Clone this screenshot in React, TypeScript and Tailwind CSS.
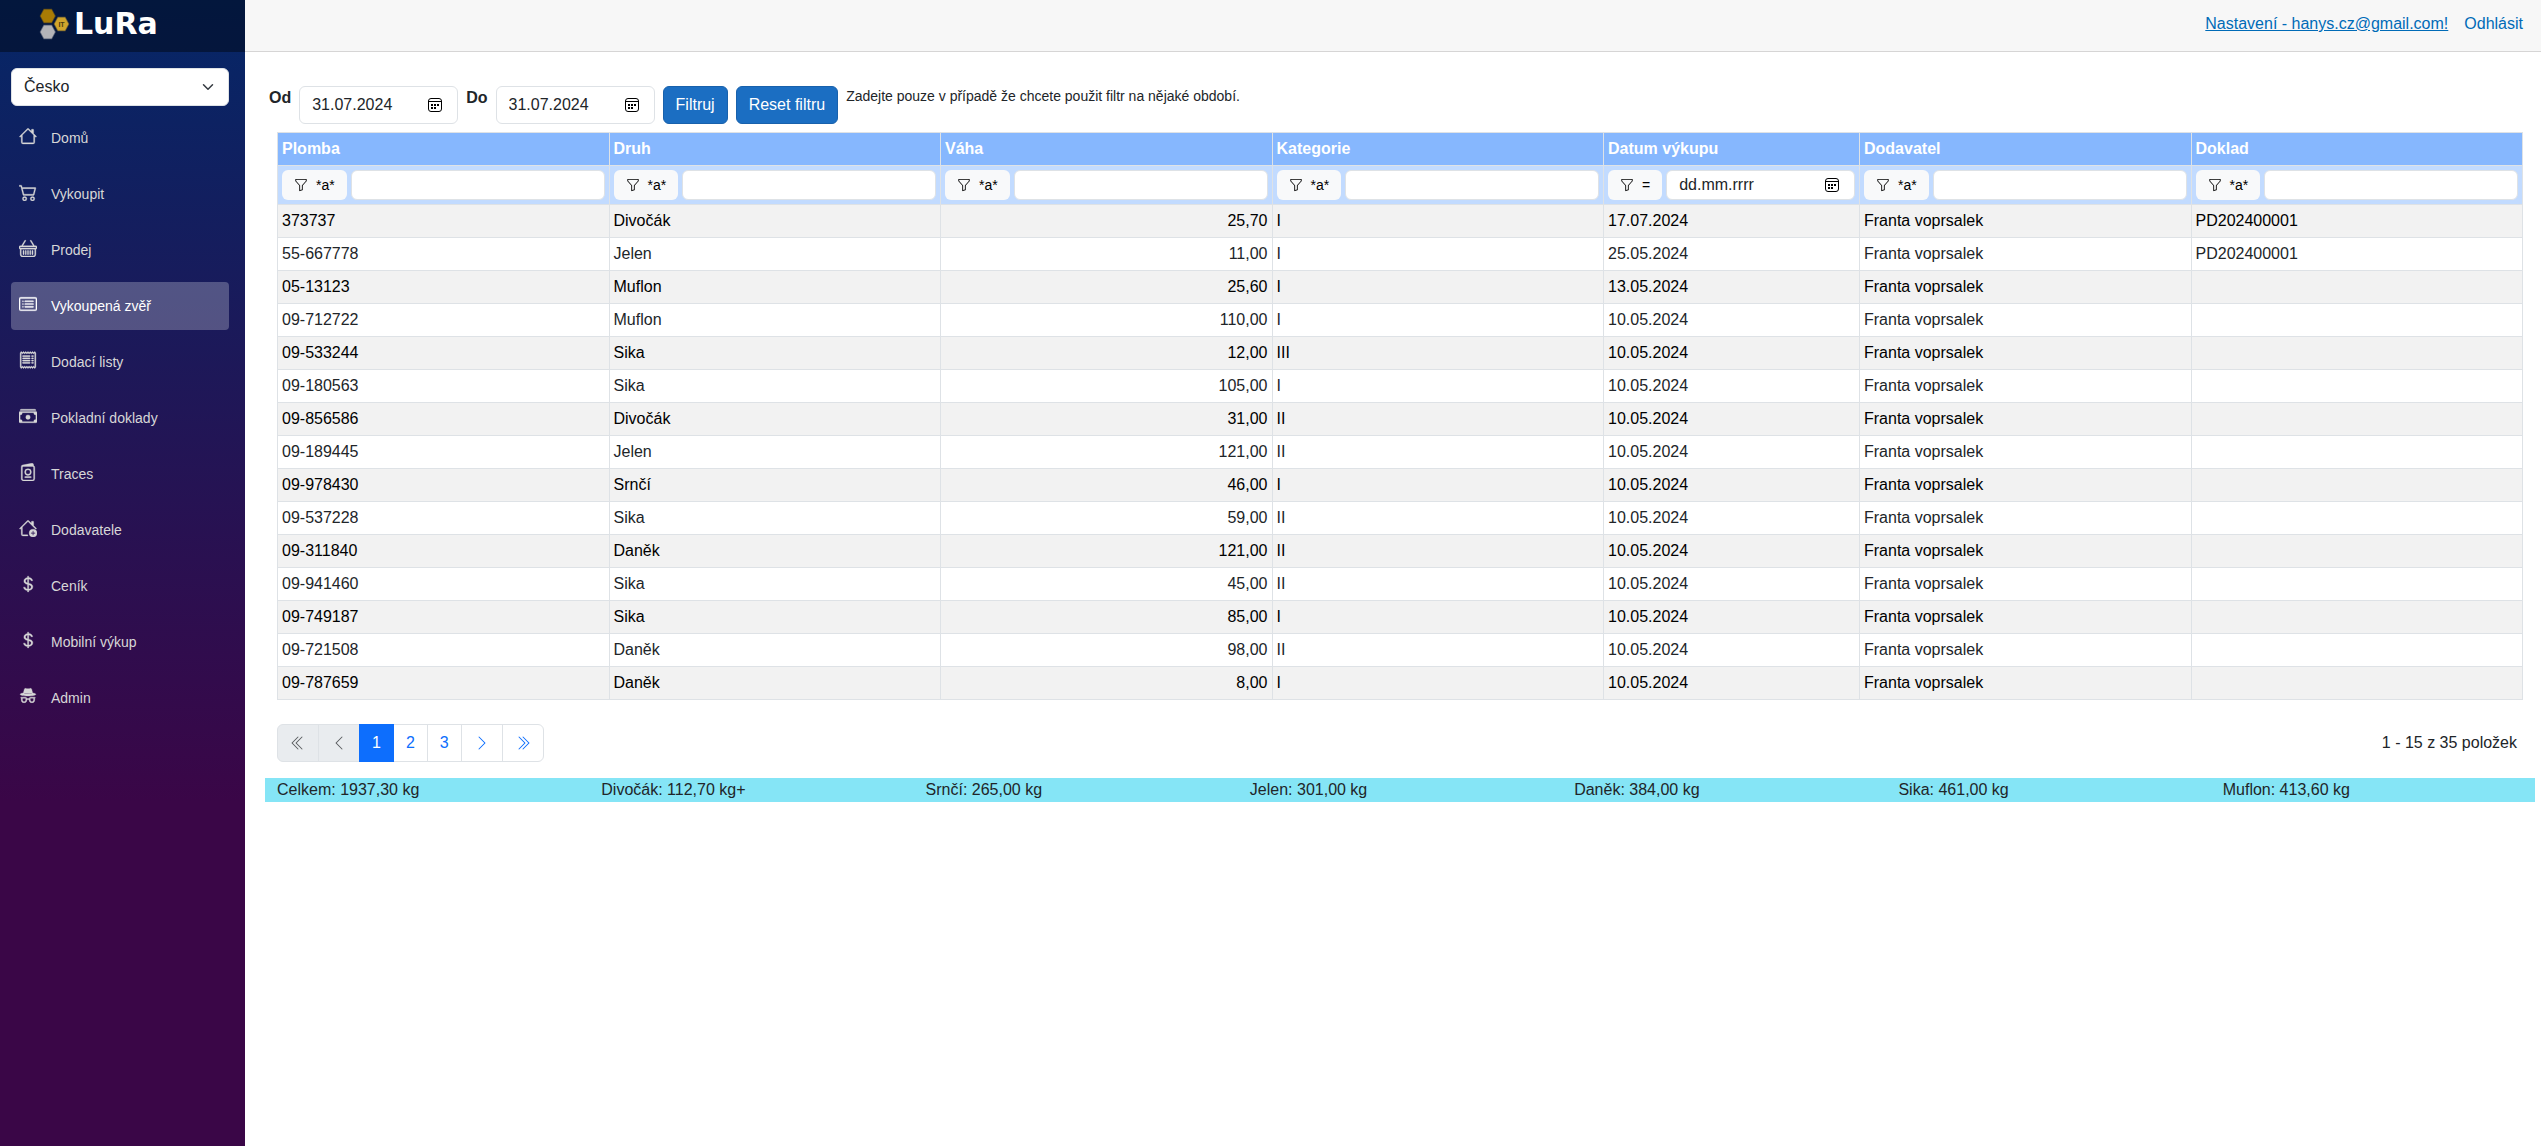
import { useState } from 'react';
import type { IconType } from 'react-icons';
import {
  BsBasket,
  BsCardList,
  BsCart2,
  BsCashStack,
  BsChevronDoubleLeft,
  BsChevronDoubleRight,
  BsChevronLeft,
  BsChevronRight,
  BsCurrencyDollar,
  BsFunnel,
  BsHouse,
  BsHouseAdd,
  BsIncognito,
  BsPassport,
  BsReceipt,
} from 'react-icons/bs';

const navItems: { label: string; icon: IconType }[] = [
  { label: 'Domů', icon: BsHouse },
  { label: 'Vykoupit', icon: BsCart2 },
  { label: 'Prodej', icon: BsBasket },
  { label: 'Vykoupená zvěř', icon: BsCardList },
  { label: 'Dodací listy', icon: BsReceipt },
  { label: 'Pokladní doklady', icon: BsCashStack },
  { label: 'Traces', icon: BsPassport },
  { label: 'Dodavatele', icon: BsHouseAdd },
  { label: 'Ceník', icon: BsCurrencyDollar },
  { label: 'Mobilní výkup', icon: BsCurrencyDollar },
  { label: 'Admin', icon: BsIncognito },
];

const columns = ['Plomba', 'Druh', 'Váha', 'Kategorie', 'Datum výkupu', 'Dodavatel', 'Doklad'];

const supplier = 'Franta voprsalek';

const rows = [
  ['373737', 'Divočák', '25,70', 'I', '17.07.2024', supplier, 'PD202400001'],
  ['55-667778', 'Jelen', '11,00', 'I', '25.05.2024', supplier, 'PD202400001'],
  ['05-13123', 'Muflon', '25,60', 'I', '13.05.2024', supplier, ''],
  ['09-712722', 'Muflon', '110,00', 'I', '10.05.2024', supplier, ''],
  ['09-533244', 'Sika', '12,00', 'III', '10.05.2024', supplier, ''],
  ['09-180563', 'Sika', '105,00', 'I', '10.05.2024', supplier, ''],
  ['09-856586', 'Divočák', '31,00', 'II', '10.05.2024', supplier, ''],
  ['09-189445', 'Jelen', '121,00', 'II', '10.05.2024', supplier, ''],
  ['09-978430', 'Srnčí', '46,00', 'I', '10.05.2024', supplier, ''],
  ['09-537228', 'Sika', '59,00', 'II', '10.05.2024', supplier, ''],
  ['09-311840', 'Daněk', '121,00', 'II', '10.05.2024', supplier, ''],
  ['09-941460', 'Sika', '45,00', 'II', '10.05.2024', supplier, ''],
  ['09-749187', 'Sika', '85,00', 'I', '10.05.2024', supplier, ''],
  ['09-721508', 'Daněk', '98,00', 'II', '10.05.2024', supplier, ''],
  ['09-787659', 'Daněk', '8,00', 'I', '10.05.2024', supplier, ''],
];

const totals = [
  'Celkem: 1937,30 kg',
  'Divočák: 112,70 kg+',
  'Srnčí: 265,00 kg',
  'Jelen: 301,00 kg',
  'Daněk: 384,00 kg',
  'Sika: 461,00 kg',
  'Muflon: 413,60 kg',
];

export default function App() {
  return (
    <div className="flex min-h-screen bg-white font-['Liberation_Sans',Arial,sans-serif] text-base text-[#212529]">
      <Sidebar />
      <div className="min-w-0 flex-1">
        <TopBar />
        <main className="pt-[34px] pr-1.5 pl-5">
          <FilterForm />
          <div className="px-3 pt-2">
            <GameTable />
            <Pagination />
          </div>
          <Totals />
        </main>
      </div>
    </div>
  );
}

function Sidebar() {
  const [active, setActive] = useState('Vykoupená zvěř');

  return (
    <aside className="w-[245px] shrink-0 bg-[linear-gradient(180deg,rgb(5,39,103)_0%,#3a0647_70%)]">
      <a href="#" className="flex h-[52px] gap-[3px] bg-black/40 pt-2 pl-[39px]">
        <LogoMark />
        <span className="font-['DejaVu_Sans',sans-serif] text-[30px] leading-8 font-bold text-white">
          LuRa
        </span>
      </a>
      <div className="flex flex-col gap-2 pt-4 pr-4 pl-[11px]">
        <div className="relative">
          <select
            aria-label="Země"
            className="h-[38px] w-full appearance-none rounded-md border border-[#dee2e6] bg-white px-3"
          >
            <option>Česko</option>
          </select>
          <svg
            viewBox="0 0 16 16"
            className="pointer-events-none absolute top-[13px] right-[15px] size-3 fill-none stroke-[#343a40] stroke-2"
          >
            <path d="m2 5 6 6 6-6" strokeLinecap="round" strokeLinejoin="round" />
          </svg>
        </div>
        <nav className="flex flex-col gap-2">
          {navItems.map(({ label, icon: Icon }) => (
            <a
              key={label}
              href="#"
              onClick={() => setActive(label)}
              className={
                label === active
                  ? 'flex h-12 items-center gap-3.5 rounded bg-white/25 px-2 text-sm text-white'
                  : 'flex h-12 items-center gap-3.5 rounded px-2 text-sm text-[#d7d7d7]'
              }
            >
              <span className="pb-1">
                <Icon className="size-[18px] stroke-[0.3]" />
              </span>
              {label}
            </a>
          ))}
        </nav>
      </div>
    </aside>
  );
}

function LogoMark() {
  return (
    <svg viewBox="0 0 32 32" className="size-8">
      <g strokeWidth="1.500" strokeOpacity="0.45">
        <path d="M5 1.500h7.500L16 8l-3.500 6.500H5L1.500 8z" fill="#a87b05" stroke="#a87b05" />
        <path d="M5 17.500h7.500L16 24l-3.500 6.500H5L1.500 24z" fill="#b3b3b8" stroke="#b3b3b8" />
        <path d="M19 9.500h7l3.500 6.500-3.500 6.500h-7L15.500 16z" fill="#d0a52c" stroke="#d0a52c" />
      </g>
      <text x="22.500" y="18.500" textAnchor="middle" fontSize="7" fontWeight="bold" fill="#4a3a10">
        IT
      </text>
    </svg>
  );
}

function TopBar() {
  return (
    <header className="flex h-[52px] justify-end gap-4 border-b border-[#d6d5d5] bg-[#f7f7f7] pt-3 pr-[18px]">
      <a href="#" className="text-[#006bb7] underline">
        Nastavení - hanys.cz@gmail.com!
      </a>
      <a href="#" className="text-[#006bb7]">
        Odhlásit
      </a>
    </header>
  );
}

function CalendarIcon() {
  return (
    <svg viewBox="0 0 16 16" className="size-4" fill="none" stroke="#000">
      <rect x="1.500" y="1.500" width="13" height="13" rx="2.500" />
      <path d="M1.500 4.500h13" />
      <path d="M4 8h2M7 8h2M10 8h2M4 11h2M7 11h2" strokeWidth="2" />
    </svg>
  );
}

function DateBox({ id, value }: { id: string; value: string }) {
  return (
    <div className="flex h-[38px] w-[159px] items-center rounded-md border border-[#dee2e6] bg-white pr-3.5 pl-3">
      <input id={id} defaultValue={value} className="w-full min-w-0 flex-1 outline-none" />
      <button type="button" aria-label="Vybrat datum">
        <CalendarIcon />
      </button>
    </div>
  );
}

function FilterForm() {
  return (
    <form className="flex items-start gap-2 pl-1" onSubmit={(e) => e.preventDefault()}>
      <label htmlFor="from" className="font-bold">
        Od
      </label>
      <DateBox id="from" value="31.07.2024" />
      <label htmlFor="to" className="font-bold">
        Do
      </label>
      <DateBox id="to" value="31.07.2024" />
      <button className="h-[38px] rounded-md border border-[#1861ac] bg-[#1b6ec2] px-3 text-white">
        Filtruj
      </button>
      <button
        type="reset"
        className="h-[38px] rounded-md border border-[#1861ac] bg-[#1b6ec2] px-3 text-white"
      >
        Reset filtru
      </button>
      <span className="text-sm">
        Zadejte pouze v případě že chcete použit filtr na nějaké období.
      </span>
    </form>
  );
}

function GameTable() {
  return (
    <table className="w-full table-fixed border-collapse border border-[#dee2e6]">
      <colgroup>
        {columns.map((name) => (
          <col key={name} className={name === 'Datum výkupu' ? 'w-64' : ''} />
        ))}
      </colgroup>
      <thead>
        <tr className="bg-[#86b7fe] text-left text-white">
          {columns.map((name) => (
            <th key={name} className="border border-[#dee2e6] p-1 font-bold">
              {name}
            </th>
          ))}
        </tr>
        <tr className="bg-[#c2dbff]">
          {columns.map((name) => (
            <td key={name} className="border border-[#dee2e6] p-1">
              <ColumnFilter name={name} />
            </td>
          ))}
        </tr>
      </thead>
      <tbody>
        {rows.map((row) => (
          <tr key={row[0]} className="odd:bg-[#f2f2f2] odd:text-black">
            {row.map((value, i) => (
              <td
                key={columns[i]}
                className={
                  columns[i] === 'Váha'
                    ? 'h-[33px] border border-[#dee2e6] p-1 text-right'
                    : 'h-[33px] border border-[#dee2e6] p-1'
                }
              >
                {value}
              </td>
            ))}
          </tr>
        ))}
      </tbody>
    </table>
  );
}

function ColumnFilter({ name }: { name: string }) {
  const isDate = name === 'Datum výkupu';

  return (
    <div className="flex gap-1">
      <button
        type="button"
        aria-label={`Filtr ${name}`}
        className="flex h-[30px] shrink-0 items-center gap-2 rounded-md bg-[#f8f9fa] px-3 text-sm text-black"
      >
        <BsFunnel className="size-3.5" />
        <span>{isDate ? '=' : '*a*'}</span>
      </button>
      {isDate ? (
        <div className="flex h-[30px] min-w-0 flex-1 items-center rounded-md border border-[#dee2e6] bg-white pr-3.5 pl-3">
          <input
            aria-label={name}
            placeholder="dd.mm.rrrr"
            className="w-full min-w-0 flex-1 outline-none placeholder:text-[#212529]"
          />
          <button type="button" aria-label="Vybrat datum">
            <CalendarIcon />
          </button>
        </div>
      ) : (
        <input
          aria-label={name}
          className="h-[30px] min-w-0 flex-1 rounded-md border border-[#dee2e6] bg-white px-2"
        />
      )}
    </div>
  );
}

function Pagination() {
  return (
    <div className="flex items-center justify-between pt-6 pr-1.5 pb-4">
      <nav aria-label="Stránkování" className="flex h-[38px] -space-x-px text-[#0d6efd]">
        <button
          aria-label="První"
          disabled
          className="rounded-l-md border border-[#dee2e6] bg-[#e9ecef] px-3 text-[#595c5f]"
        >
          <BsChevronDoubleLeft className="size-4" />
        </button>
        <button
          aria-label="Předchozí"
          disabled
          className="border border-[#dee2e6] bg-[#e9ecef] px-3 text-[#595c5f]"
        >
          <BsChevronLeft className="size-4" />
        </button>
        <button className="z-10 border border-[#0d6efd] bg-[#0d6efd] px-3 text-white">1</button>
        <button className="border border-[#dee2e6] px-3">2</button>
        <button className="border border-[#dee2e6] px-3">3</button>
        <button aria-label="Další" className="border border-[#dee2e6] px-3">
          <BsChevronRight className="size-4" />
        </button>
        <button aria-label="Poslední" className="rounded-r-md border border-[#dee2e6] px-3">
          <BsChevronDoubleRight className="size-4" />
        </button>
      </nav>
      <span>1 - 15 z 35 položek</span>
    </div>
  );
}

function Totals() {
  return (
    <div className="grid grid-cols-7 bg-[#85e5f6]">
      {totals.map((total) => (
        <div key={total} className="px-3">
          {total}
        </div>
      ))}
    </div>
  );
}
